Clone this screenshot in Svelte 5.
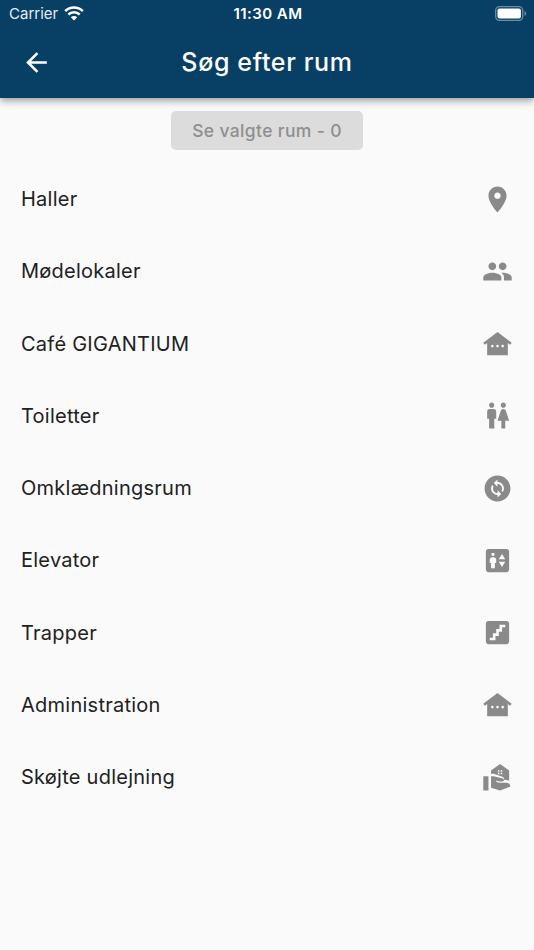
<script lang="ts">
  type IconName = 'place' | 'people' | 'house' | 'wc' | 'change' | 'elevator' | 'stairs' | 'rental'

  const icons: Record<IconName, string> = {
    place:
      'M12 2C8.13 2 5 5.13 5 9c0 5.25 7 13 7 13s7-7.75 7-13c0-3.87-3.13-7-7-7zm0 9.5c-1.38 0-2.5-1.12-2.5-2.5s1.12-2.5 2.5-2.5 2.5 1.12 2.5 2.5-1.12 2.5-2.5 2.5z',
    people:
      'M16 11c1.66 0 2.99-1.34 2.99-3S17.66 5 16 5c-1.66 0-3 1.34-3 3s1.34 3 3 3zm-8 0c1.66 0 2.99-1.34 2.99-3S9.66 5 8 5C6.34 5 5 6.34 5 8s1.34 3 3 3zm0 2c-2.33 0-7 1.17-7 3.5V19h14v-2.5c0-2.33-4.67-3.5-7-3.5zm8 0c-.29 0-.62.02-.97.05 1.16.84 1.97 1.97 1.97 3.45V19h6v-2.5c0-2.33-4.67-3.5-7-3.5z',
    house:
      'M12 3L1 11.4l1.21 1.59L4 11.62V21h16v-9.38l1.79 1.36L23 11.4 12 3zM8 15a1 1 0 110-2 1 1 0 010 2zm4 0a1 1 0 110-2 1 1 0 010 2zm4 0a1 1 0 110-2 1 1 0 010 2z',
    wc: 'M5.5 22v-7.5H4V9c0-1.1.9-2 2-2h3c1.1 0 2 .9 2 2v5.5H9.5V22h-4zM18 22v-6h3l-2.54-7.63C18.18 7.55 17.42 7 16.56 7h-.12c-.86 0-1.63.55-1.9 1.37L12 16h3v6h3zM7.5 6c1.11 0 2-.89 2-2s-.89-2-2-2-2 .89-2 2 .89 2 2 2zm9 0c1.11 0 2-.89 2-2s-.89-2-2-2-2 .89-2 2 .89 2 2 2z',
    change:
      'M12 2C6.48 2 2 6.48 2 12s4.48 10 10 10 10-4.48 10-10S17.52 2 12 2zm.06 17v-2.01H12c-1.28 0-2.56-.49-3.54-1.46-1.71-1.71-1.92-4.35-.64-6.29l1.1 1.1c-.71 1.33-.53 3.01.59 4.13.7.7 1.62 1.03 2.54 1.01v-2.14l2.83 2.83L12.06 19zm4.11-4.24l-1.1-1.1c.71-1.33.53-3.01-.59-4.13C13.79 8.84 12.9 8.5 12 8.5h-.06v2.15L9.11 7.83 11.94 5v2.02c1.3-.02 2.61.45 3.6 1.45 1.7 1.7 1.91 4.35.63 6.29z',
    elevator:
      'M19 3H5c-1.1 0-2 .9-2 2v14c0 1.1.9 2 2 2h14c1.1 0 2-.9 2-2V5c0-1.1-.9-2-2-2zM8.5 6a1.25 1.25 0 110 2.5 1.25 1.25 0 010-2.5zM11 14h-1v4H7v-4H6v-2.5c0-1.1.9-2 2-2h1c1.1 0 2 .9 2 2V14zm4.5 3L13 13h5l-2.5 4zM13 11l2.5-4 2.5 4h-5z',
    stairs:
      'M19 3H5c-1.1 0-2 .9-2 2v14c0 1.1.9 2 2 2h14c1.1 0 2-.9 2-2V5c0-1.1-.9-2-2-2zm-1 5h-2.42v3.33H13v3.33h-2.58V18H6v-2h2.42v-3.33H11V9.33h2.58V6H18v2z',
    rental:
      'M1 11h4v11H1zM14 1.5l-7 5V9h2l6.3 2.3c1.2.4 2 1.5 2 2.7H19c.7 0 1.4.2 2 .6V6.5l-7-5zM13.5 9.5h-1.2V8.300h1.2v1.2zm0-2h-1.2V6.300h1.2v1.2zm2.200 2h-1.2V8.300h1.2v1.2zm0-2h-1.2V6.300h1.2v1.2zM19 16h-5.9l-2.1-.73.33-.94 1.77.67h2.8c.6 0 1.1-.5 1.1-1.1 0-.5-.3-.9-.8-1.05L8.970 11H7v9.020L14 22l8-3c0-1.7-1.3-3-3-3z',
  }

  const rooms: { name: string; icon: IconName }[] = [
    { name: 'Haller', icon: 'place' },
    { name: 'Mødelokaler', icon: 'people' },
    { name: 'Café GIGANTIUM', icon: 'house' },
    { name: 'Toiletter', icon: 'wc' },
    { name: 'Omklædningsrum', icon: 'change' },
    { name: 'Elevator', icon: 'elevator' },
    { name: 'Trapper', icon: 'stairs' },
    { name: 'Administration', icon: 'house' },
    { name: 'Skøjte udlejning', icon: 'rental' },
  ]

  let selected = $state<string[]>([])

  function toggle(name: string) {
    selected = selected.includes(name) ? selected.filter((n) => n !== name) : [...selected, name]
  }
</script>

<div class="screen">
  <header class="top">
    <div class="status">
      <span class="carrier">
        Carrier
        <svg class="wifi" viewBox="0 0 20 15" aria-hidden="true">
          <path class="arc" d="M1.2 5.2a12.5 12.5 0 0 1 17.6 0M4.3 8.5a8.1 8.1 0 0 1 11.4 0" />
          <path class="dot" d="M6.8 11.300a4.600 4.600 0 0 1 6.400 0L10 14.500z" />
        </svg>
      </span>
      <span class="time">11:30 AM</span>
      <svg class="battery" viewBox="0 0 32 15" aria-hidden="true">
        <rect class="shell" x=".7" y=".7" width="27" height="13.6" rx="3.8" />
        <rect class="charge" x="2.5" y="2.5" width="23.4" height="10" rx="2" />
        <path class="cap" d="M29.5 5v5c1-.4 1.7-1.4 1.7-2.5S30.5 5.4 29.5 5z" />
      </svg>
    </div>
    <div class="bar">
      <button class="back" aria-label="Tilbage">
        <svg viewBox="0 0 24 24">
          <path d="M20 11H7.83l5.59-5.59L12 4l-8 8 8 8 1.41-1.41L7.83 13H20v-2z" />
        </svg>
      </button>
      <h1>Søg efter rum</h1>
    </div>
  </header>

  <main>
    <button class="chosen" disabled={selected.length === 0}>Se valgte rum - {selected.length}</button>

    <ul class="rooms">
      {#each rooms as room (room.name)}
        <li>
          <button class="room" onclick={() => toggle(room.name)}>
            <span>{room.name}</span>
            <svg viewBox="0 0 24 24" aria-hidden="true">
              <path fill-rule="evenodd" d={icons[room.icon]} />
            </svg>
          </button>
        </li>
      {/each}
    </ul>
  </main>
</div>

<style>
  :global(body) {
    margin: 0;
    background: #fafafa;
  }
  .screen {
    min-height: 950px;
    background: #fafafa;
    font-family: Inter, 'Liberation Sans', sans-serif;
    color: #212121;
  }
  button {
    border: 0;
    font: inherit;
    color: inherit;
  }
  .top {
    position: relative;
    height: 98px;
    background: #083f64;
    color: #fff;
    box-shadow:
      0 2px 5px -1px rgba(0, 0, 0, 0.2),
      0 5px 6px rgba(0, 0, 0, 0.14),
      0 1px 12px rgba(0, 0, 0, 0.12);
  }
  .status {
    display: grid;
    grid-template-columns: 1fr auto 1fr;
    align-items: center;
    height: 27px;
    padding: 0 7px 0 9px;
    font-size: 15px;
  }
  .carrier {
    display: flex;
    align-items: center;
    gap: 6px;
    color: #e6ecf0;
  }
  .wifi {
    width: 20px;
    height: 15px;
  }
  .wifi .arc {
    fill: none;
    stroke: #fff;
    stroke-width: 2.5;
  }
  .wifi .dot {
    fill: #fff;
  }
  .time {
    font-weight: 600;
    letter-spacing: 0.45px;
  }
  .battery {
    justify-self: end;
    width: 32px;
    height: 15px;
  }
  .shell {
    fill: none;
    stroke: #6e8ca2;
    stroke-width: 1.3;
  }
  .charge {
    fill: #fff;
  }
  .cap {
    fill: #6e8ca2;
  }
  .bar {
    display: grid;
    grid-template-columns: 72px 1fr 72px;
    align-items: center;
    height: 70px;
  }
  .back {
    display: flex;
    justify-content: center;
    padding: 0;
    background: none;
  }
  .back svg {
    width: 31px;
    height: 31px;
    fill: #fff;
  }
  h1 {
    margin: 0;
    text-align: center;
    font-size: 25px;
    font-weight: 450;
    letter-spacing: 0.65px;
  }
  main {
    display: flex;
    flex-direction: column;
    align-items: center;
    padding-top: 13px;
  }
  .chosen {
    width: 192px;
    height: 39px;
    padding: 0 0 1px;
    border-radius: 5px;
    background: #dcdcdc;
    color: #8f8f8f;
    font-size: 17.5px;
    font-weight: 500;
    letter-spacing: 0.35px;
  }
  .rooms {
    align-self: stretch;
    margin: 13px 0 0;
    padding: 0;
    list-style: none;
  }
  .room {
    display: flex;
    align-items: center;
    justify-content: space-between;
    width: 100%;
    height: 72.25px;
    padding: 0 21px;
    background: none;
    font-size: 20px;
    letter-spacing: 0.25px;
    text-align: left;
  }
  .room svg {
    width: 31px;
    height: 31px;
    fill: #8a8a8a;
  }
</style>
